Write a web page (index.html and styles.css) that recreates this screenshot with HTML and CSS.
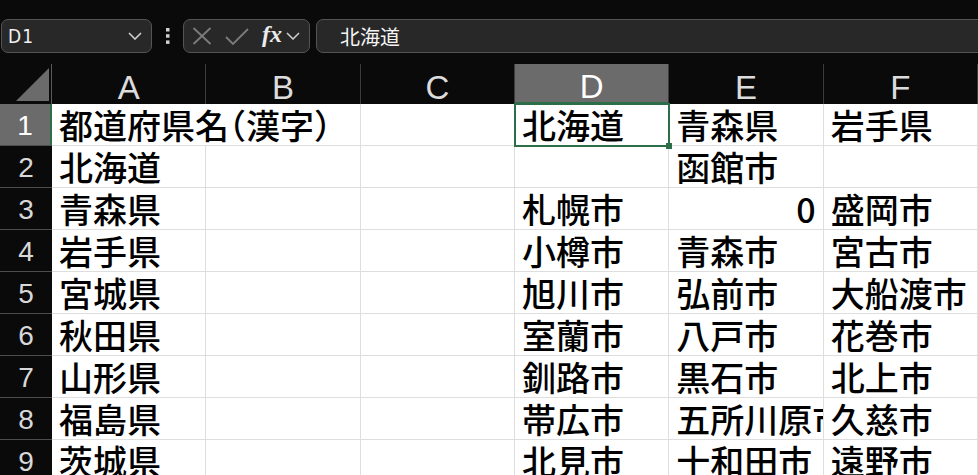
FILE: index.html
```html
<!DOCTYPE html>
<html lang="ja">
<head>
    <meta charset="UTF-8">
    <meta name="viewport" content="width=device-width, initial-scale=1.0">
    <title>都道府県一覧</title>
    <link rel="stylesheet" href="styles.css">
</head>
<body>
    <div class="topbar">
        <div class="namebox">
            <span class="ref">D1</span>
            <svg width="14" height="8" viewBox="0 0 14 8"><polyline points="1,1 7,7 13,1" fill="none" stroke="#cfcfcf" stroke-width="1.6"/></svg>
        </div>
        <div class="dots">
            <svg width="4" height="16" viewBox="0 0 4 16"><rect x="0" y="0" width="3.5" height="3.5" fill="#d0d0d0"/><rect x="0" y="6.2" width="3.5" height="3.5" fill="#d0d0d0"/><rect x="0" y="12.4" width="3.5" height="3.5" fill="#d0d0d0"/></svg>
        </div>
        <div class="fxbox">
            <svg class="icon-x" width="20" height="18" viewBox="0 0 20 18"><path d="M1.5 1 L18.5 17 M18.5 1 L1.5 17" stroke="#7c7c7c" stroke-width="1.8" fill="none"/></svg>
            <svg class="icon-ok" width="24" height="17" viewBox="0 0 24 17"><polyline points="1,9 8,16 23,1" stroke="#7c7c7c" stroke-width="1.8" fill="none"/></svg>
            <span class="fx">fx</span>
            <svg width="14" height="8" viewBox="0 0 14 8"><polyline points="1,1 7,7 13,1" fill="none" stroke="#cfcfcf" stroke-width="1.5"/></svg>
        </div>
        <div class="formula">北海道</div>
    </div>

    <div class="sheet">
        <div class="corner">
            <svg width="52" height="40" viewBox="0 0 52 40"><polygon points="49,4 49,37 16,37" fill="#6b6b6b"/></svg>
        </div>
        <div class="col-head">A</div>
        <div class="col-head">B</div>
        <div class="col-head">C</div>
        <div class="col-head selected">D</div>
        <div class="col-head">E</div>
        <div class="col-head">F</div>

        <div class="row-head selected">1</div>
        <div class="cell wide">都道府県名<span class="half">（</span>漢字<span class="half">）</span></div>
        <div class="cell"></div>
        <div class="cell active">北海道</div>
        <div class="cell">青森県</div>
        <div class="cell">岩手県</div>

        <div class="row-head">2</div>
        <div class="cell">北海道</div>
        <div class="cell"></div>
        <div class="cell"></div>
        <div class="cell"></div>
        <div class="cell">函館市</div>
        <div class="cell"></div>

        <div class="row-head">3</div>
        <div class="cell">青森県</div>
        <div class="cell"></div>
        <div class="cell"></div>
        <div class="cell">札幌市</div>
        <div class="cell num">0</div>
        <div class="cell">盛岡市</div>

        <div class="row-head">4</div>
        <div class="cell">岩手県</div>
        <div class="cell"></div>
        <div class="cell"></div>
        <div class="cell">小樽市</div>
        <div class="cell">青森市</div>
        <div class="cell">宮古市</div>

        <div class="row-head">5</div>
        <div class="cell">宮城県</div>
        <div class="cell"></div>
        <div class="cell"></div>
        <div class="cell">旭川市</div>
        <div class="cell">弘前市</div>
        <div class="cell">大船渡市</div>

        <div class="row-head">6</div>
        <div class="cell">秋田県</div>
        <div class="cell"></div>
        <div class="cell"></div>
        <div class="cell">室蘭市</div>
        <div class="cell">八戸市</div>
        <div class="cell">花巻市</div>

        <div class="row-head">7</div>
        <div class="cell">山形県</div>
        <div class="cell"></div>
        <div class="cell"></div>
        <div class="cell">釧路市</div>
        <div class="cell">黒石市</div>
        <div class="cell">北上市</div>

        <div class="row-head">8</div>
        <div class="cell">福島県</div>
        <div class="cell"></div>
        <div class="cell"></div>
        <div class="cell">帯広市</div>
        <div class="cell">五所川原市</div>
        <div class="cell">久慈市</div>

        <div class="row-head">9</div>
        <div class="cell">茨城県</div>
        <div class="cell"></div>
        <div class="cell"></div>
        <div class="cell">北見市</div>
        <div class="cell">十和田市</div>
        <div class="cell">遠野市</div>
    </div>
</body>
</html>
```

FILE: styles.css
```css
body {
    margin: 0;
    width: 978px;
    height: 475px;
    overflow: hidden;
    background-color: #0a0a0a;
    font-family: "Liberation Sans", Arial, sans-serif;
}

/* formula bar */
.topbar {
    display: flex;
    align-items: flex-start;
    height: 64px;
    box-sizing: border-box;
    padding: 19px 0 0 1px;
}
.namebox,
.fxbox,
.formula {
    height: 34px;
    box-sizing: border-box;
    border: 1px solid #545454;
    border-radius: 7px;
    background-color: #282828;
    display: flex;
    align-items: center;
}
.namebox {
    width: 151px;
    justify-content: space-between;
    padding: 0 9px 0 6px;
}
.ref {
    color: #f0f0f0;
    font-family: "Liberation Sans Narrow", "DejaVu Sans Condensed", "Liberation Sans", sans-serif;
    font-stretch: condensed;
    font-size: 19px;
    letter-spacing: 1px;
}
.dots {
    width: 31px;
    display: flex;
    justify-content: center;
    padding-top: 9px;
}
.fxbox {
    width: 127px;
    padding: 0 6px 0 8px;
}
.icon-x {
    margin-right: 13px;
}
.icon-ok {
    margin-right: 13px;
}
.fx {
    color: #ececec;
    font-family: "Liberation Serif", serif;
    font-style: italic;
    font-weight: bold;
    font-size: 24px;
    margin-right: 4px;
    margin-top: -3px;
}
.formula {
    flex: 1;
    margin-left: 6px;
    margin-right: -12px;
    padding-left: 23px;
    color: #f4f4f4;
    font-family: "Noto Sans CJK JP", sans-serif;
    font-size: 20px;
}

/* sheet grid */
.sheet {
    display: grid;
    grid-template-columns: 52px repeat(6, 1fr);
    grid-template-rows: 40px repeat(9, 42px);
}
.corner {
    background-color: #0a0a0a;
    border-right: 1px solid #5a5a5a;
    box-sizing: border-box;
}
.corner svg {
    display: block;
}
.col-head {
    background-color: #0a0a0a;
    border-right: 1px solid #3c3c3c;
    color: #dcdcdc;
    font-size: 33px;
    text-align: center;
    line-height: 33px;
    padding-top: 7px;
    box-sizing: border-box;
}
.col-head.selected {
    background-color: #6b6b6b;
    color: #ffffff;
    border-bottom: 2px solid #2b6e47;
    line-height: 31px;
}
.row-head {
    background-color: #0a0a0a;
    border-bottom: 1px solid #4c4c4c;
    color: #d8d8d8;
    font-size: 28px;
    text-align: center;
    line-height: 38px;
    padding-top: 3px;
    box-sizing: border-box;
}
.row-head.selected {
    background-color: #6b6b6b;
    color: #ffffff;
    border-right: 2px solid #2b6e47;
}
.cell {
    background-color: #ffffff;
    border-right: 1px solid #dedede;
    border-bottom: 1px solid #dedede;
    box-sizing: border-box;
    padding: 0 7px;
    color: #000000;
    font-family: "Noto Sans CJK JP", sans-serif;
    font-weight: 500;
    font-size: 34px;
    line-height: 41px;
    white-space: nowrap;
    overflow: hidden;
}
.cell.wide {
    grid-column: span 2;
}
.cell.num {
    text-align: right;
}
.half {
    font-feature-settings: "halt";
}
.cell.active {
    position: relative;
    overflow: visible;
    outline: 2px solid #2b6e47;
    outline-offset: -1px;
    z-index: 1;
}
.cell.active::after {
    content: "";
    position: absolute;
    right: -4px;
    bottom: -4px;
    width: 6px;
    height: 6px;
    background-color: #2b6e47;
}
```
